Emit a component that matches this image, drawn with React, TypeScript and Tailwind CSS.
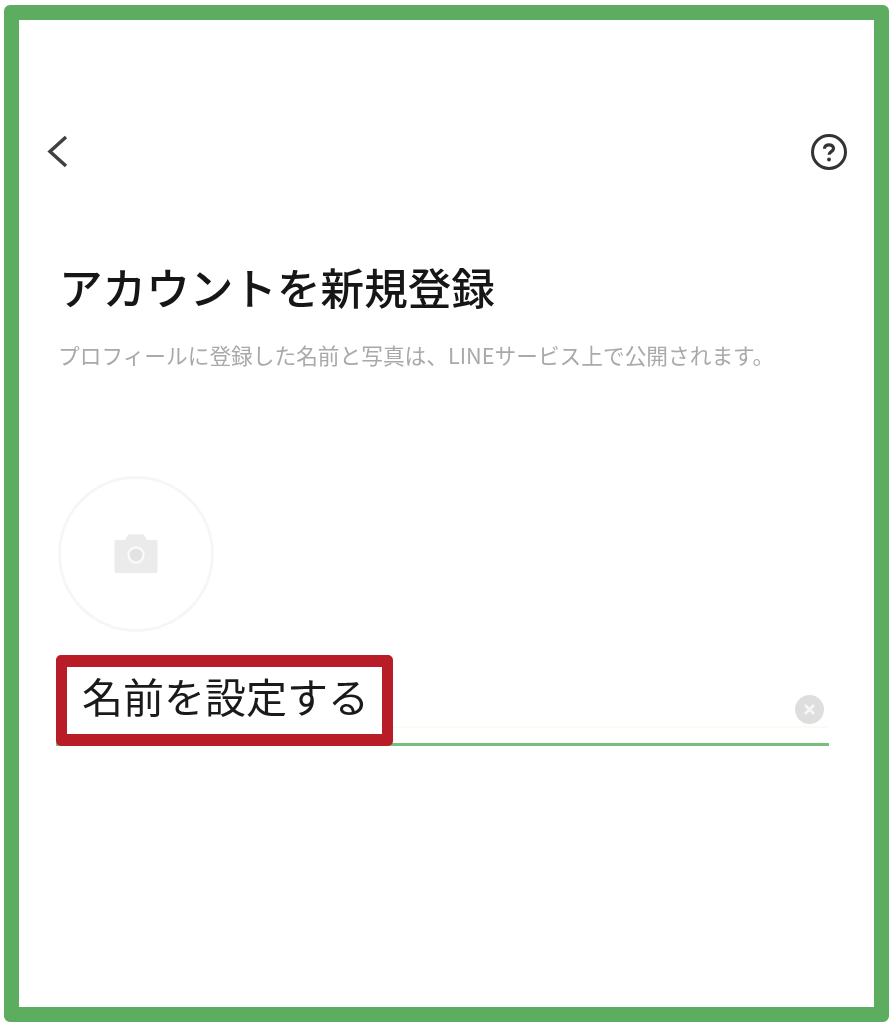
const jpFont = "font-['Noto_Sans_CJK_JP','Noto_Sans',sans-serif]";

const CameraIcon = () => (
  <svg width="44" height="40" viewBox="0 0 44 40" className="block mb-[2px]">
    <path
      d="M2 7h9l3-5.500h16l3 5.500h9q1.500 0 1.500 1.500v30q0 1.500-1.500 1.500h-40q-1.500 0-1.500-1.500v-30q0-1.500 1.500-1.500z"
      fill="#ebebeb"
    />
    <circle cx="22" cy="22" r="7.500" fill="#e2e2e2" stroke="#f9f9f9" strokeWidth="2.500" />
  </svg>
);

const App = () => {
  return (
    <div className={`w-[893px] h-[1024px] bg-white pt-[5px] pl-[4px] pr-[4px] pb-[2px] ${jpFont}`}>
      <div className="w-full h-full border-[15px] border-[#5cad5f] rounded-[6px] bg-white flex flex-col">
        <header className="flex justify-between items-center pl-[27px] pr-[26px] mt-[113px] h-[37px]">
          <svg width="24" height="37" viewBox="0 0 24 37" fill="none" className="blur-[0.6px]">
            <path d="M20 4L4 18.500L20 33" stroke="#404040" strokeWidth="3.500" />
          </svg>
          <svg width="38" height="38" viewBox="0 0 38 38" fill="none" className="blur-[0.6px]">
            <circle cx="19" cy="19" r="16.500" stroke="#333333" strokeWidth="3" />
            <path
              d="M14.500 15.800c0-2.600 2-4 4.500-4s4.500 1.500 4.500 3.700c0 3.200-4.500 3-4.500 6.300"
              stroke="#333333"
              strokeWidth="3.200"
            />
            <circle cx="19" cy="26.500" r="1.900" fill="#333333" />
          </svg>
        </header>

        <h1 className="mt-[84px] ml-[40px] text-[43.600px] leading-[64px] font-medium text-[#161616] whitespace-nowrap blur-[0.7px]">
          アカウントを新規登録
        </h1>
        <p className="mt-[22px] ml-[39px] text-[21.700px] leading-[30px] text-[#a9a9a9] whitespace-nowrap blur-[0.7px]">
          プロフィールに登録した名前と写真は、LINEサービス上で公開されます。
        </p>

        <div className="mt-[106px] ml-[39px] w-[156px] h-[156px] rounded-full border-[3px] border-[#f6f6f5] flex items-center justify-center blur-[0.6px]">
          <CameraIcon />
        </div>

        <div className="relative mt-[23px] ml-[37px] w-[773px] h-[91px] flex">
          <div className="absolute left-[337px] right-0 bottom-[18px] h-[2px] bg-[#fdfaf3]" />
          <div className="absolute left-0 right-0 bottom-0 h-[3px] bg-[#74c07c] blur-[0.5px]" />
          <div className="relative w-[337px] h-[91px] border-x-[11px] border-y-[12px] border-[#b81c26] rounded-[5px] bg-white flex items-center pl-[15px] pb-[11px]">
            <span className="text-[41px] leading-[60px] text-[#1a1a1a] whitespace-nowrap blur-[0.5px]">
              名前を設定する
            </span>
          </div>
          <div className="ml-auto mr-[5px] mt-[40px] w-[29px] h-[29px] rounded-full bg-[#dedede] flex items-center justify-center blur-[0.7px]">
            <svg width="15" height="15" viewBox="0 0 15 15" fill="none">
              <path d="M3 3l9 9M12 3l-9 9" stroke="#f7f7f7" strokeWidth="2.500" />
            </svg>
          </div>
        </div>
      </div>
    </div>
  );
};

export default App;
